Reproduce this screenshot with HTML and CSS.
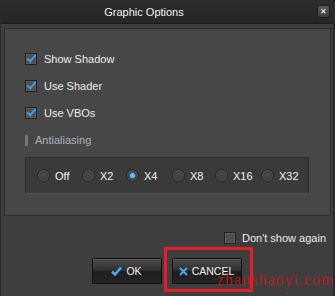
FILE: index.html
```html
<!DOCTYPE html>
<html lang="en">
<head>
<meta charset="UTF-8">
<title>Graphic Options</title>
<link rel="stylesheet" href="styles.css">
</head>
<body>

<div class="window">
  <div class="titlebar">
    <span class="title">Graphic Options</span>
    <span class="close">&#x2715;</span>
  </div>

  <div class="body">
    <div class="panel">
      <label class="check on"><i></i>Show Shadow</label>
      <label class="check on"><i></i>Use Shader</label>
      <label class="check on"><i></i>Use VBOs</label>

      <div class="group-title">Antialiasing</div>
      <div class="radios">
        <label class="radio"><i></i>Off</label>
        <label class="radio"><i></i>X2</label>
        <label class="radio sel"><i></i>X4</label>
        <label class="radio"><i></i>X8</label>
        <label class="radio"><i></i>X16</label>
        <label class="radio"><i></i>X32</label>
      </div>
    </div>

    <div class="again"><label class="check"><i></i>Don't show again</label></div>

    <div class="btns">
      <button class="btn">
        <svg class="ico" width="11" height="10" viewBox="0 0 11 10"><path d="M1 5.5 L4 8.5 L10 1.5" fill="none" stroke="#4aa8f0" stroke-width="2.6"/></svg>OK
      </button>
      <button class="btn">
        <svg class="ico" width="9" height="9" viewBox="0 0 9 9"><path d="M1 1 L8 8 M8 1 L1 8" fill="none" stroke="#4aa8f0" stroke-width="2"/></svg>CANCEL
      </button>
    </div>
  </div>

  <!-- 标注 -->
  <div class="mark"></div>
  <div class="wm">zhanshaoyi.com</div>
</div>

</body>
</html>
```

FILE: styles.css
```css
*{margin:0;padding:0;box-sizing:border-box}
body{background:#3d3d3d;font-family:"Liberation Sans",Arial,sans-serif;font-size:11px;color:#e6e6e6}
.window{position:relative;width:335px;height:296px;background:#3e3e3e;border-left:1px solid #2a2a2a;border-right:2px solid #2a2a2a;display:flex;flex-direction:column}

.titlebar{height:24px;background:linear-gradient(#2c2c2c,#262626);border-bottom:1px solid #1a1a1a;display:flex;align-items:center;position:relative}
.title{flex:1;text-align:center;padding-right:30px;font-size:11px;color:#f0f0f0}
.close{width:13px;height:13px;margin-right:3px;margin-top:-1px;background:linear-gradient(#5a5a5a,#3a3a3a);border:1px solid #1c1c1c;border-radius:2px;color:#fff;font-size:8px;line-height:11px;text-align:center}

.body{padding:4px 2px 0 3px;flex:1;display:flex;flex-direction:column}
.panel{height:188px;background:#474747;border:1px solid #2c2c2c;padding:24px 0 0 20px;display:flex;flex-direction:column}

.check{display:flex;align-items:center;height:12px;gap:7px;color:#ececec}
.panel .check+.check{margin-top:15px}
.check i{width:12px;height:12px;border:1px solid #202020;background:#4e4e4e;box-shadow:inset 0 0 0 1px #5c5c5c;position:relative}
.check.on i::after{content:"";position:absolute;left:1px;top:1px;width:7px;height:3px;border-left:2px solid #3aa3f0;border-bottom:2px solid #3aa3f0;transform:rotate(-48deg)}

.group-title{margin-top:16px;height:11px;line-height:11px;border-left:3px solid #777;padding-left:7px;color:#a9b3bd}
.radios{margin-top:11px;width:284px;height:37px;background:#3a3a3a;border:1px solid #2d2d2d;border-bottom-color:#555;padding-left:11px;display:grid;grid-template-columns:45px 44px 46px 43px 46px auto;align-items:center}
.radio{display:flex;align-items:center;gap:5px;color:#eef2f6}
.radio i{width:13px;height:13px;border-radius:50%;border:1px solid #262626;background:radial-gradient(circle at 50% 40%,#4a4a4a,#343434);box-shadow:inset 0 0 0 1px #555;position:relative}
.radio.sel i::after{content:"";position:absolute;left:3px;top:3px;width:5px;height:5px;border-radius:50%;background:#5cc4f7;box-shadow:0 0 2px #2a8fd0}

.again{display:flex;justify-content:flex-end;padding-right:5px;margin-top:16px}
.again .check{gap:6px}

.btns{display:flex;justify-content:center;gap:10px;margin-top:14px;padding-right:2px}
.btn{width:70px;height:26px;border:1px solid #111;border-radius:1px;background:linear-gradient(#4c4c4c,#2e2e2e 50%,#1e1e1e 51%,#242424);color:#f2f2f2;font-family:"Liberation Sans",Arial,sans-serif;font-size:10.5px;display:flex;align-items:center;justify-content:center;gap:4px;box-shadow:inset 0 1px 0 #5a5a5a}

/* 标注 */
.mark{position:absolute;left:163px;top:247px;width:89px;height:45px;border:3px solid #e41e26}
.wm{position:absolute;left:216px;top:271px;font-family:"Liberation Serif",serif;font-size:16px;color:rgba(220,20,30,.75);letter-spacing:1px}
```
